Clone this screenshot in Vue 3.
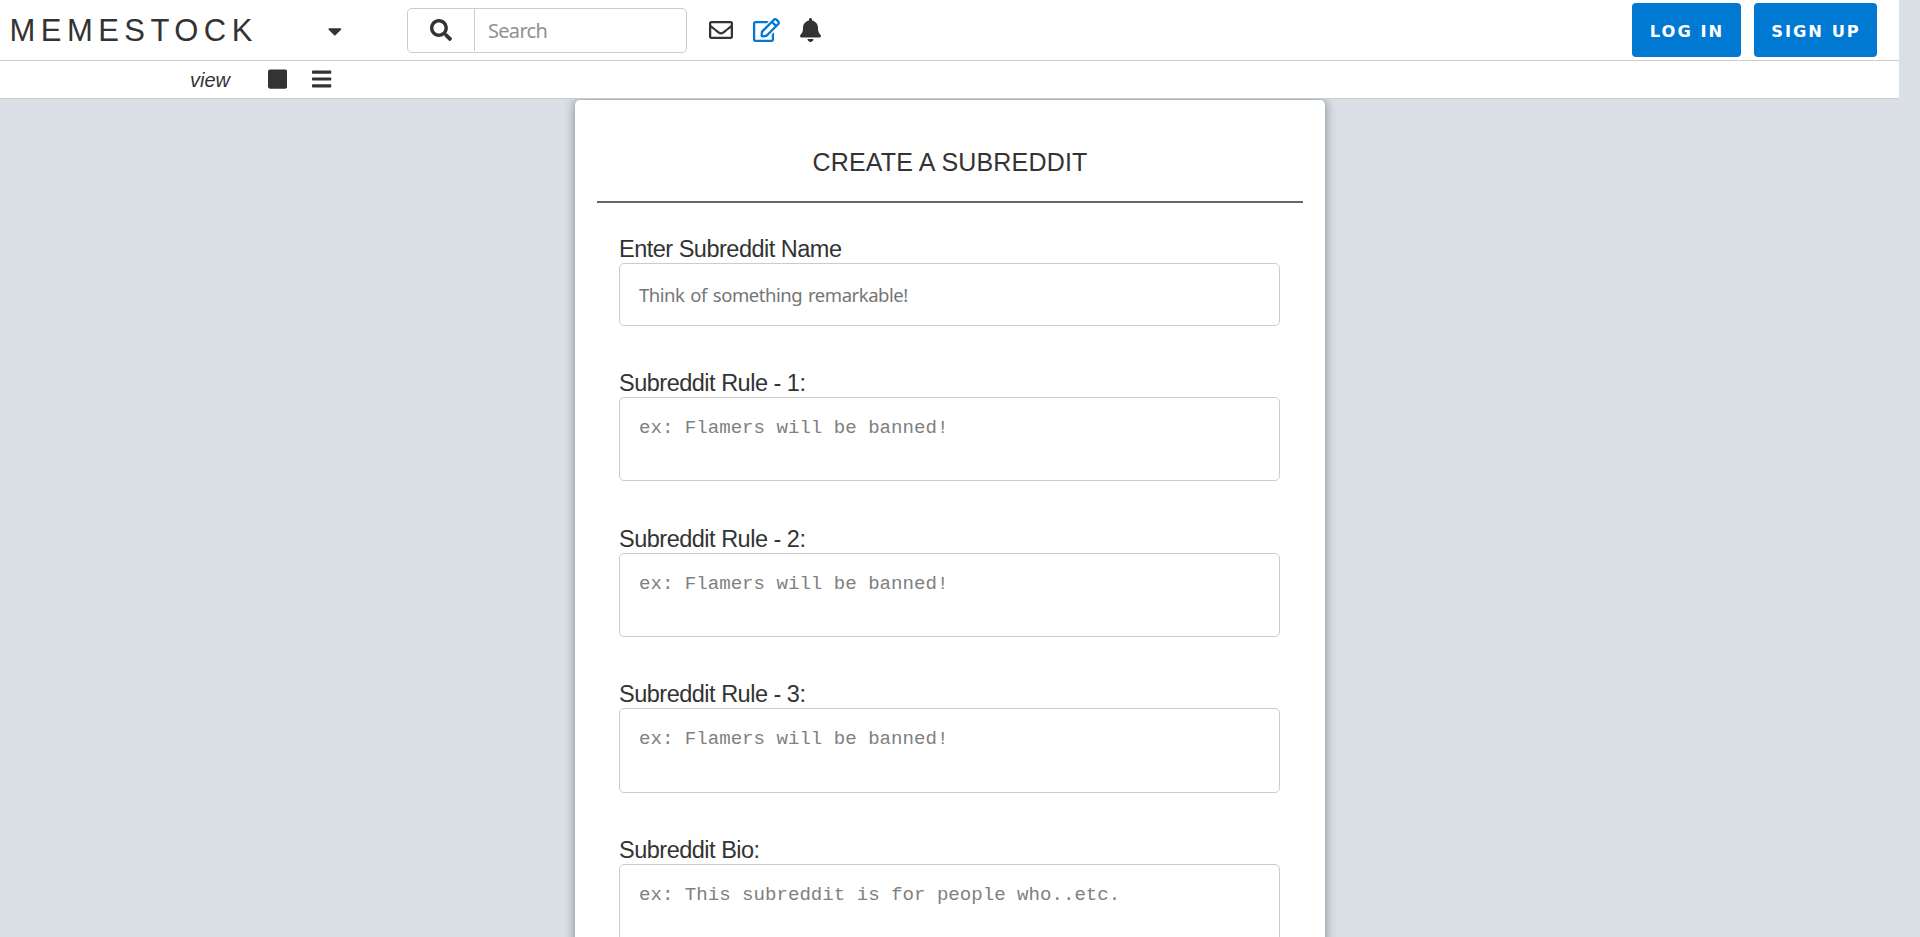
<script setup>
const rules = [1, 2, 3]
</script>

<template>
  <div class="page">
    <header class="navbar">
      <div class="brand">MEMESTOCK</div>
      <svg class="caret" viewBox="0 0 320 512"><path d="M31.3 192h257.3c17.8 0 26.7 21.5 14.1 34.1L174.1 354.8c-7.8 7.8-20.5 7.8-28.3 0L17.2 226.1C4.6 213.5 13.5 192 31.3 192z" /></svg>
      <div class="search">
        <div class="search-button">
          <svg viewBox="0 0 512 512"><path d="M505 442.7L405.3 343c-4.5-4.5-10.6-7-17-7H372c27.6-35.3 44-79.7 44-128C416 93.1 322.9 0 208 0S0 93.1 0 208s93.1 208 208 208c48.3 0 92.7-16.4 128-44v16.3c0 6.4 2.5 12.5 7 17l99.7 99.7c9.4 9.4 24.6 9.4 33.9 0l28.3-28.3c9.4-9.4 9.4-24.6.1-34zM208 336c-70.7 0-128-57.2-128-128 0-70.7 57.2-128 128-128 70.7 0 128 57.2 128 128 0 70.7-57.2 128-128 128z" /></svg>
        </div>
        <input class="search-input" placeholder="Search" />
      </div>
      <nav class="icons">
        <svg class="mail" viewBox="0 0 512 512"><path d="M464 64H48C21.49 64 0 85.49 0 112v288c0 26.51 21.49 48 48 48h416c26.51 0 48-21.49 48-48V112c0-26.51-21.49-48-48-48zm0 48v40.805c-22.422 18.259-58.168 46.651-134.587 106.49-16.841 13.247-50.201 45.072-73.413 44.701-23.208.375-56.579-31.459-73.413-44.701C106.18 199.465 70.425 171.067 48 152.805V112h416zM48 400V214.398c22.914 18.251 55.409 43.862 104.938 82.646 21.857 17.205 60.134 55.186 103.062 54.955 42.717.231 80.509-37.199 103.053-54.947 49.528-38.783 82.032-64.401 104.947-82.653V400H48z" /></svg>
        <svg class="edit" viewBox="0 0 576 512"><path d="M402.3 344.9l32-32c5-5 13.7-1.5 13.7 5.7V464c0 26.5-21.5 48-48 48H48c-26.5 0-48-21.5-48-48V112c0-26.5 21.5-48 48-48h273.5c7.1 0 10.7 8.6 5.7 13.7l-32 32c-1.5 1.5-3.5 2.3-5.7 2.3H48v352h352V350.5c0-2.1.8-4.1 2.3-5.6zm156.6-201.8L296.3 405.7l-90.4 10c-26.2 2.9-48.5-19.2-45.6-45.6l10-90.4L432.9 17.1c22.9-22.9 59.9-22.9 82.7 0l43.2 43.2c22.9 22.9 22.9 60 .1 82.8zM460.1 174L402 115.9 216.2 301.8l-7.3 65.3 65.3-7.3L460.1 174zm64.8-79.7l-43.2-43.2c-4.1-4.1-10.8-4.1-14.8 0L436 82l58.1 58.1 30.9-30.9c4-4.2 4-10.8-.1-14.9z" /></svg>
        <svg class="bell" viewBox="0 0 448 512"><path d="M224 512c35.32 0 63.97-28.65 63.97-64H160.03c0 35.35 28.65 64 63.97 64zm215.39-149.71c-19.32-20.76-55.47-51.99-55.47-154.29 0-77.7-54.48-139.9-127.94-155.16V32c0-17.67-14.32-32-31.98-32s-31.98 14.33-31.98 32v20.84C118.56 68.1 64.08 130.3 64.08 208c0 102.3-36.15 133.53-55.47 154.29-6 6.45-8.66 14.16-8.61 21.71.11 16.4 12.98 32 32.1 32h383.8c19.12 0 32-15.6 32.1-32 .05-7.55-2.61-15.27-8.61-21.71z" /></svg>
      </nav>
      <div class="auth">
        <button class="btn login">LOG IN</button>
        <button class="btn signup">SIGN UP</button>
      </div>
    </header>

    <div class="viewbar">
      <span class="view-label">view</span>
      <svg class="view-icon" viewBox="0 0 448 512"><path d="M400 32H48C21.5 32 0 53.5 0 80v352c0 26.5 21.5 48 48 48h352c26.5 0 48-21.5 48-48V80c0-26.5-21.5-48-48-48z" /></svg>
      <svg class="view-icon" viewBox="0 0 448 512"><path d="M16 132h416c8.837 0 16-7.163 16-16V76c0-8.837-7.163-16-16-16H16C7.163 60 0 67.163 0 76v40c0 8.837 7.163 16 16 16zm0 160h416c8.837 0 16-7.163 16-16v-40c0-8.837-7.163-16-16-16H16c-8.837 0-16 7.163-16 16v40c0 8.837 7.163 16 16 16zm0 160h416c8.837 0 16-7.163 16-16v-40c0-8.837-7.163-16-16-16H16c-8.837 0-16 7.163-16 16v40c0 8.837 7.163 16 16 16z" /></svg>
    </div>

    <main class="content">
      <form class="card">
        <h1 class="title"><span>CREATE A SUBREDDIT</span></h1>
        <div class="fields">
          <div class="field name-field">
            <label><span>Enter Subreddit Name</span></label>
            <input class="control" placeholder="Think of something remarkable!" />
          </div>
          <div v-for="n in rules" :key="n" class="field">
            <label><span>Subreddit Rule - {{ n }}:</span></label>
            <textarea class="control" placeholder="ex: Flamers will be banned!"></textarea>
          </div>
          <div class="field">
            <label><span>Subreddit Bio:</span></label>
            <textarea class="control bio" placeholder="ex: This subreddit is for people who..etc."></textarea>
          </div>
        </div>
      </form>
    </main>
  </div>
</template>

<style>
body {
  background: #dae0e6;
  overflow: hidden;
}
</style>

<style scoped>
.page {
  width: 1899px;
  height: 937px;
  overflow: hidden;
  display: flex;
  flex-direction: column;
  color: #333;
  font-family: "Liberation Sans", Arial, sans-serif;
}
.page * {
  box-sizing: border-box;
}
svg {
  display: block;
  flex: none;
  fill: #333;
}
.navbar {
  flex: none;
  display: flex;
  align-items: center;
  height: 61px;
  padding: 0 22px 0 9.5px;
  background: #fff;
  border-bottom: 1px solid #ccc;
}
.brand {
  width: 318.5px;
  padding-top: 2px;
  font-size: 31px;
  line-height: 58px;
  letter-spacing: 5.45px;
  white-space: nowrap;
}
.caret {
  width: 13.75px;
  height: 22px;
  margin-top: 2px;
}
.search {
  display: flex;
  width: 280px;
  height: 45px;
  margin-left: 65.25px;
  border: 1px solid #ccc;
  border-radius: 5px;
}
.search-button {
  display: flex;
  align-items: center;
  justify-content: center;
  width: 67px;
  height: 42px;
  padding-right: 1px;
  border-right: 1px solid #ccc;
}
.search-button svg {
  width: 22px;
  height: 22px;
}
.search-input {
  flex: 1;
  min-width: 0;
  padding: 0 0 0 13px;
  border: 0;
  background: transparent;
  font-family: "Noto Sans", sans-serif;
  font-size: 20px;
  letter-spacing: -0.7px;
}
.search-input::placeholder {
  color: #919191;
  opacity: 1;
}
.icons {
  display: flex;
  align-items: center;
  gap: 20px;
  margin-left: 22px;
}
.icons svg {
  height: 24px;
}
.mail {
  width: 24px;
}
.edit {
  width: 27px;
}
.edit path {
  fill: #0079d3;
}
.bell {
  width: 21px;
}
.auth {
  display: flex;
  gap: 13px;
  margin-left: auto;
}
.btn {
  height: 54px;
  padding: 2px 0 0 1px;
  border: 0;
  border-radius: 4px;
  background: #0079d3;
  color: #fff;
  font-family: "DejaVu Sans", Verdana, sans-serif;
  font-size: 16.3px;
  font-weight: 700;
  letter-spacing: 2px;
  white-space: nowrap;
}
.login {
  width: 109px;
}
.signup {
  width: 123px;
}
.viewbar {
  flex: none;
  display: flex;
  align-items: center;
  height: 38px;
  padding: 0 0 1px 190px;
  background: #fff;
  border-bottom: 1px solid #ccc;
}
.view-label {
  width: 78px;
  padding-top: 3px;
  font-size: 20px;
  font-style: italic;
}
.view-icon {
  width: 19.25px;
  height: 22px;
  margin-right: 25px;
}
.content {
  flex: 1;
  min-height: 0;
  overflow: hidden;
  padding: 1px 0 0 575px;
}
.card {
  width: 750px;
  height: 900px;
  padding: 0 22px;
  background: #fff;
  border-radius: 5px;
  box-shadow: 0 0 11px rgba(60, 70, 75, 0.6);
}
.title {
  display: flex;
  justify-content: center;
  width: 706px;
  height: 103px;
  margin: 0;
  padding-top: 48px;
  border-bottom: 2px solid #666;
  font-size: 25px;
  line-height: 29px;
  font-weight: 400;
  letter-spacing: 0.17px;
  white-space: nowrap;
}
.fields {
  padding: 34px 23px 0 22px;
}
.field {
  display: flex;
  flex-direction: column;
  height: 155.67px;
}
.name-field {
  height: 134px;
}
label {
  height: 26px;
  font-size: 23.5px;
  line-height: 24px;
  letter-spacing: -0.5px;
}
.control {
  display: block;
  width: 661px;
  height: 63px;
  margin: 0;
  padding: 0 19px;
  border: 1px solid #ccc;
  border-radius: 5px;
  background: #fff;
  font-family: "Noto Sans", sans-serif;
  font-size: 18.5px;
  letter-spacing: -0.46px;
  word-spacing: 1.5px;
}
textarea.control {
  height: 84.3px;
  padding-top: 19px;
  font-family: "Liberation Mono", monospace;
  font-size: 19.1px;
  line-height: 22px;
  letter-spacing: 0;
  word-spacing: 0;
  resize: none;
}
textarea.bio {
  height: 130px;
}
.control::placeholder {
  color: #757575;
  opacity: 1;
}
textarea.control::placeholder {
  color: #808080;
}
</style>
